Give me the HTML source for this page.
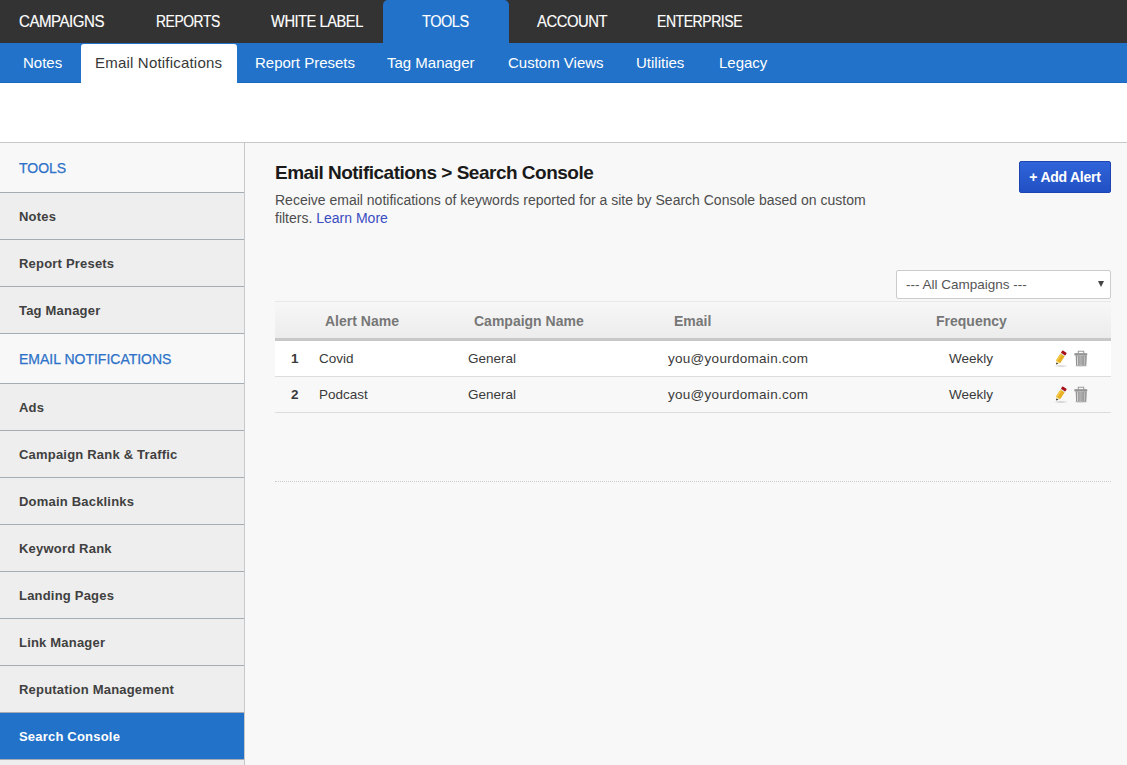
<!DOCTYPE html>
<html><head><meta charset="utf-8">
<style>
*{margin:0;padding:0;box-sizing:border-box}
html,body{width:1127px;height:765px;overflow:hidden;background:#fff;font-family:"Liberation Sans",sans-serif}
.abs{position:absolute}
#top{position:absolute;left:0;top:0;width:1127px;height:43px;background:#333}
#top .t{position:absolute;top:0;height:43px;line-height:43px;color:#fff;font-size:16px;letter-spacing:-0.5px;white-space:nowrap;transform-origin:0 0;-webkit-text-stroke:0.15px #fff}
#tools{position:absolute;left:383px;top:0;width:126px;height:43px;background:#2272c9;border-radius:5px 5px 0 0}
#sub{position:absolute;left:0;top:43px;width:1127px;height:40px;background:#2272c9}
#sub .t{position:absolute;top:0;height:40px;line-height:40px;color:#fff;font-size:15px;white-space:nowrap}
#subact{position:absolute;left:81px;top:1px;width:156px;height:39px;background:#fff;border-radius:3px 3px 0 0}
#hdrline{position:absolute;left:0;top:142px;width:1127px;height:1px;background:#c8c8c8}
#side{position:absolute;left:0;top:143px;width:244px;height:622px;background:#eee}
#sideb{position:absolute;left:244px;top:143px;width:1px;height:622px;background:#c8c8c8}
#content{position:absolute;left:245px;top:143px;width:882px;height:622px;background:#f8f8f8}
.si{position:absolute;left:0;width:244px;background:#eee;border-bottom:1px solid #a4acb4;color:#404040;font-size:13px;font-weight:bold;padding-left:19px;white-space:nowrap;letter-spacing:0.2px}
.sh{background:#f8f8f8;color:#2d72c8;font-size:14px;font-weight:normal;letter-spacing:0;-webkit-text-stroke:0.25px #2d72c8}
.sa{background:#2272c9;color:#fff!important}
.th{position:absolute;top:303px;height:36px;line-height:36px;font-size:14px;font-weight:bold;color:#777;white-space:nowrap}
.td{position:absolute;height:35px;line-height:35px;font-size:13.5px;color:#3a3a3a;white-space:nowrap}
.b{font-weight:bold}
</style></head><body>
<div id="top">
  <div id="tools"></div>
  <div class="t" style="left:19px;transform:scaleX(0.941)">CAMPAIGNS</div>
  <div class="t" style="left:156px;transform:scaleX(0.867)">REPORTS</div>
  <div class="t" style="left:271px;transform:scaleX(0.916)">WHITE LABEL</div>
  <div class="t" style="left:422px;transform:scaleX(0.908)">TOOLS</div>
  <div class="t" style="left:537px;transform:scaleX(0.928)">ACCOUNT</div>
  <div class="t" style="left:657px;transform:scaleX(0.875)">ENTERPRISE</div>
</div>
<div id="sub">
  <div id="subact"></div>
  <div class="t" style="left:23px">Notes</div>
  <div class="t" style="left:95px;color:#383838;letter-spacing:0.2px">Email Notifications</div>
  <div class="t" style="left:255px">Report Presets</div>
  <div class="t" style="left:387px">Tag Manager</div>
  <div class="t" style="left:508px">Custom Views</div>
  <div class="t" style="left:636px">Utilities</div>
  <div class="t" style="left:719px">Legacy</div>
</div>
<div class="abs" style="left:0;top:82px;width:81px;height:1px;background:#1b69c2"></div><div class="abs" style="left:237px;top:82px;width:890px;height:1px;background:#1b69c2"></div>
<div id="hdrline"></div>
<div id="side">
  <div class="si sh" style="top:0;height:50px;line-height:51px">TOOLS</div>
  <div class="si" style="top:50px;height:47px;line-height:48px">Notes</div>
  <div class="si" style="top:97px;height:47px;line-height:48px">Report Presets</div>
  <div class="si" style="top:144px;height:47px;line-height:48px">Tag Manager</div>
  <div class="si sh" style="top:191px;height:50px;line-height:51px">EMAIL NOTIFICATIONS</div>
  <div class="si" style="top:241px;height:47px;line-height:48px">Ads</div>
  <div class="si" style="top:288px;height:47px;line-height:48px">Campaign Rank &amp; Traffic</div>
  <div class="si" style="top:335px;height:47px;line-height:48px">Domain Backlinks</div>
  <div class="si" style="top:382px;height:47px;line-height:48px">Keyword Rank</div>
  <div class="si" style="top:429px;height:47px;line-height:48px">Landing Pages</div>
  <div class="si" style="top:476px;height:47px;line-height:48px">Link Manager</div>
  <div class="si" style="top:523px;height:47px;line-height:48px">Reputation Management</div>
  <div class="si sa" style="top:570px;height:47px;line-height:48px">Search Console</div>
</div>
<div id="sideb"></div>
<div id="content"></div>
<div class="abs" style="left:275px;top:160px;font-size:19px;font-weight:bold;color:#1a1a1a;white-space:nowrap;line-height:26px;letter-spacing:-0.5px">Email Notifications &gt; Search Console</div>
<div class="abs" style="left:275px;top:191px;width:650px;font-size:14px;color:#4d4d4d;line-height:18px">Receive email notifications of keywords reported for a site by Search Console based on custom<br>filters. <span style="color:#3b4cc0">Learn More</span></div>
<div class="abs" id="btn" style="left:1019px;top:161px;width:92px;height:32px;border:1px solid #1d44b0;border-radius:2px;background:linear-gradient(#3064d8,#2150c4);color:#fff;font-weight:bold;font-size:14px;line-height:30px;text-align:center;white-space:nowrap;letter-spacing:-0.25px">+ Add Alert</div>
<div class="abs" id="sel" style="left:896px;top:270px;width:215px;height:29px;border:1px solid #ccc;background:#fff;color:#555;font-size:13.5px;line-height:27px;padding-left:9px;white-space:nowrap;border-radius:2px">--- All Campaigns ---<span class="abs" style="left:201px;top:10px;width:0;height:0;border-left:3px solid transparent;border-right:3px solid transparent;border-top:6px solid #444"></span></div>
<div class="abs" style="left:275px;top:301px;width:836px;height:1px;background:#e8e8e8"></div>
<div class="abs" style="left:275px;top:302px;width:836px;height:36px;background:linear-gradient(#f7f7f7,#ececec)"></div>
<div class="abs" style="left:275px;top:338px;width:836px;height:3px;background:#c8c8c8"></div>
<div class="abs" style="left:275px;top:341px;width:836px;height:35px;background:#fff"></div>
<div class="abs" style="left:275px;top:376px;width:836px;height:1px;background:#ddd"></div>
<div class="abs" style="left:275px;top:412px;width:836px;height:1px;background:#ddd"></div>
<div class="abs" style="left:275px;top:481px;width:836px;height:0;border-top:1px dotted #ccc"></div>
<div class="th" style="left:325px">Alert Name</div>
<div class="th" style="left:474px">Campaign Name</div>
<div class="th" style="left:674px">Email</div>
<div class="th" style="left:936px">Frequency</div>
<div class="td b" style="left:291px;top:341px">1</div>
<div class="td" style="left:319px;top:341px">Covid</div>
<div class="td" style="left:468px;top:341px">General</div>
<div class="td" style="left:668px;top:341px;letter-spacing:0.28px">you@yourdomain.com</div>
<div class="td" style="left:949px;top:341px">Weekly</div>
<div class="td b" style="left:291px;top:377px">2</div>
<div class="td" style="left:319px;top:377px">Podcast</div>
<div class="td" style="left:468px;top:377px">General</div>
<div class="td" style="left:668px;top:377px;letter-spacing:0.28px">you@yourdomain.com</div>
<div class="td" style="left:949px;top:377px">Weekly</div>
<svg class="abs" style="left:1050px;top:346px" width="42" height="24" viewBox="1050 346 42 24">
<defs>
<radialGradient id="sh" cx="0.5" cy="0.5" r="0.5"><stop offset="0" stop-color="#000" stop-opacity="0.22"/><stop offset="1" stop-color="#000" stop-opacity="0"/></radialGradient>
<linearGradient id="tg" x1="0" x2="1" y1="0" y2="0"><stop offset="0" stop-color="#8c8c8c"/><stop offset="0.45" stop-color="#b0b0b0"/><stop offset="1" stop-color="#858585"/></linearGradient>
<linearGradient id="lg" x1="0" x2="0" y1="0" y2="1"><stop offset="0" stop-color="#a8a8a8"/><stop offset="1" stop-color="#888"/></linearGradient>
</defs>
<ellipse cx="1061" cy="366" rx="7.5" ry="1.3" fill="url(#sh)"/>
<ellipse cx="1081" cy="366" rx="7.5" ry="1.3" fill="url(#sh)"/>
<g transform="translate(1056.4 364.4) rotate(-57)">
<polygon points="0,0 3,-2.3 3,2.3" fill="#f3e3b0"/>
<polygon points="0,0 1.6,-1.2 1.6,1.2" fill="#111"/>
<rect x="3" y="-2.5" width="8.4" height="5" fill="#e8b020"/>
<rect x="3" y="-2.5" width="8.4" height="1.7" fill="#f2c94a"/>
<rect x="11.4" y="-2.5" width="0.8" height="5" fill="#cfe0e8"/>
<rect x="12.2" y="-2.6" width="3" height="5.2" fill="#a80f18" rx="0.6"/>
</g>
<path d="M1078.3 353.3 V351.3 H1083.7 V353.3" fill="none" stroke="#9a9a9a" stroke-width="1.1"/>
<rect x="1074.3" y="352.9" width="13" height="2.6" rx="0.8" fill="url(#lg)"/>
<path d="M1075.7 355.4 H1086.7 L1086.3 365.8 H1076.1 Z" fill="url(#tg)"/>
<rect x="1077.1" y="356.2" width="0.9" height="8.8" fill="#dcdcdc"/>
<rect x="1084.3" y="356.2" width="0.9" height="8.8" fill="#d0d0d0"/>
</svg>
<svg class="abs" style="left:1050px;top:382px" width="42" height="24" viewBox="1050 346 42 24">
<defs>
<radialGradient id="sh2" cx="0.5" cy="0.5" r="0.5"><stop offset="0" stop-color="#000" stop-opacity="0.22"/><stop offset="1" stop-color="#000" stop-opacity="0"/></radialGradient>
<linearGradient id="tg2" x1="0" x2="1" y1="0" y2="0"><stop offset="0" stop-color="#8c8c8c"/><stop offset="0.45" stop-color="#b0b0b0"/><stop offset="1" stop-color="#858585"/></linearGradient>
<linearGradient id="lg2" x1="0" x2="0" y1="0" y2="1"><stop offset="0" stop-color="#a8a8a8"/><stop offset="1" stop-color="#888"/></linearGradient>
</defs>
<ellipse cx="1061" cy="366" rx="7.5" ry="1.3" fill="url(#sh2)"/>
<ellipse cx="1081" cy="366" rx="7.5" ry="1.3" fill="url(#sh2)"/>
<g transform="translate(1056.4 364.4) rotate(-57)">
<polygon points="0,0 3,-2.3 3,2.3" fill="#f3e3b0"/>
<polygon points="0,0 1.6,-1.2 1.6,1.2" fill="#111"/>
<rect x="3" y="-2.5" width="8.4" height="5" fill="#e8b020"/>
<rect x="3" y="-2.5" width="8.4" height="1.7" fill="#f2c94a"/>
<rect x="11.4" y="-2.5" width="0.8" height="5" fill="#cfe0e8"/>
<rect x="12.2" y="-2.6" width="3" height="5.2" fill="#a80f18" rx="0.6"/>
</g>
<path d="M1078.3 353.3 V351.3 H1083.7 V353.3" fill="none" stroke="#9a9a9a" stroke-width="1.1"/>
<rect x="1074.3" y="352.9" width="13" height="2.6" rx="0.8" fill="url(#lg2)"/>
<path d="M1075.7 355.4 H1086.7 L1086.3 365.8 H1076.1 Z" fill="url(#tg2)"/>
<rect x="1077.1" y="356.2" width="0.9" height="8.8" fill="#dcdcdc"/>
<rect x="1084.3" y="356.2" width="0.9" height="8.8" fill="#d0d0d0"/>
</svg>
</body></html>
